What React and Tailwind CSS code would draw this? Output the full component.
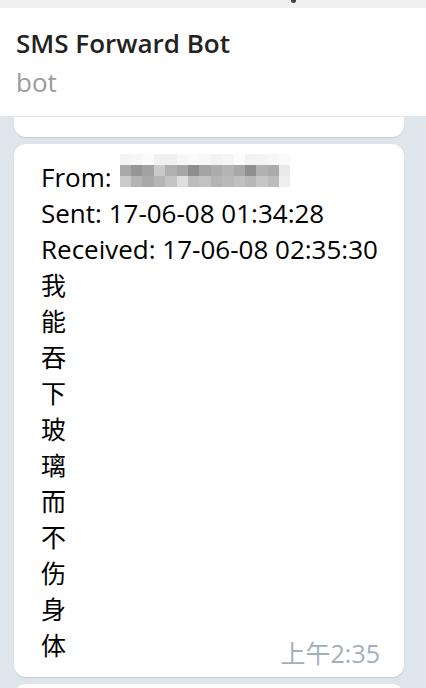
const pixelRows = [
  ["#f4f4f4", "#f6f6f6", "#fbfbfb", "#f1f1f1", "#f0f0f0", "#f6f6f6", "#fafafa", "#f7f7f7", "#f2f2f2", "#f5f5f5", "#fcfcfc", "#f3f3f3", "#f4f4f4", "#f7f7f7", "#fafafa"],
  ["#a9a9a9", "#959595", "#a2a2a2", "#c9c9c9", "#b0b0b0", "#a6a6a6", "#8e8e8e", "#a3a3a3", "#ababab", "#b4b4b4", "#a8a8a8", "#8f8f8f", "#b1b1b1", "#ababab", "#e9e9e9"],
  ["#cacaca", "#b4b4b4", "#a9a9a9", "#b5b5b5", "#c4c4c4", "#dedede", "#bdbdbd", "#c2c2c2", "#b3b3b3", "#b9b9b9", "#c0c0c0", "#b7b7b7", "#c6c6c6", "#bcbcbc", "#efefef"],
];

const lines = ["我", "能", "吞", "下", "玻", "璃", "而", "不", "伤", "身"];

const Pixelated = () => (
  <span className="flex flex-col ml-[8px] -mt-[5px]">
    {pixelRows.map((row, i) => (
      <span key={i} className="flex">
        {row.map((c, j) => (
          <span key={j} className="block w-[11.4px] h-[11px]" style={{ backgroundColor: c }} />
        ))}
      </span>
    ))}
  </span>
);

export default function App() {
  return (
    <div
      className="w-[426px] h-[688px] overflow-hidden bg-[#dee5eb] flex flex-col"
      style={{ fontFamily: '"Open Sans", "Noto Sans CJK SC", sans-serif' }}
    >
      <div className="h-[8px] bg-[#f0f0f0] shrink-0 relative">
        <span className="absolute left-[291px] top-0 w-[5px] h-[3px] bg-[#444] rounded-b-full" />
      </div>
      <div className="h-[109px] shrink-0 bg-white border-b border-[#e4e4e4] pl-[16px] pt-[19px] relative z-10">
        <div className="text-[26px] leading-[32px] font-semibold text-[#222]">SMS Forward Bot</div>
        <div className="text-[26px] leading-[46px] text-[#9b9b9b]">bot</div>
      </div>
      <div className="px-[14px] flex flex-col gap-[7px] pr-[22px]">
        <div className="h-[20px] bg-white rounded-b-[12px] shadow-[0_1px_1px_#c3ced7]" />
        <div className="bg-white rounded-[12px] shadow-[0_1px_1px_#c3ced7] pl-[27px] pr-[24px] pt-[15px] pb-[14px] text-[26px] leading-[36px] text-black">
          <div className="flex items-start">
            <span>From:</span>
            <Pixelated />
          </div>
          <div>Sent: 17-06-08 01:34:28</div>
          <div>Received: 17-06-08 02:35:30</div>
          {lines.map((ch) => (
            <div key={ch} className="text-[25px]">{ch}</div>
          ))}
          <div className="flex justify-between items-end">
            <span className="text-[25px]">体</span>
            <span className="text-[25px] leading-[36px] text-[#a3afb9] translate-y-[8px]">上午2:35</span>
          </div>
        </div>
        <div className="h-[20px] bg-white rounded-t-[12px]" />
      </div>
    </div>
  );
}
